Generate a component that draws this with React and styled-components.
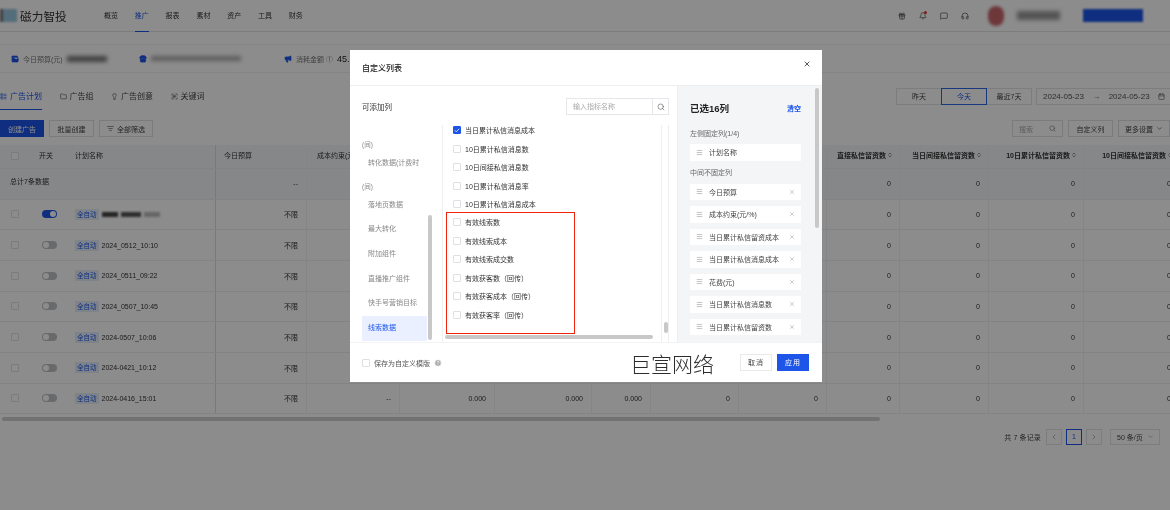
import React from "react";
import styled, { createGlobalStyle } from "styled-components";
import { Search, X, Calendar, ChevronDown, ChevronLeft, ChevronRight, ListFilter, Menu, Check, CircleHelp, Gift, Bell, MessageSquare, Headphones, LayoutList, Folder, Lightbulb, ScanText, Wallet, Store, Megaphone, ChevronsUpDown } from "lucide-react";

const Global = createGlobalStyle`
  html, body { margin: 0; padding: 0; background: #fff; }
  * { box-sizing: border-box; }
  body { font-family: "Liberation Sans", "Noto Sans CJK SC", sans-serif; color: #222; }
`;

const Stage = styled.div`
  position: relative;
  width: 1170px;
  height: 510px;
  overflow: hidden;
`;
const Page = styled.div`
  width: 1170px;
  height: 510px;
  overflow: hidden;
  background: #fff;
  filter: blur(0.6px);
`;
const TopBar = styled.header`
  height: 32px;
  display: flex;
  align-items: center;
  border-bottom: 1px solid #e3e4e6;
`;
const LogoMark = styled.div`
  width: 17px;
  height: 13px;
  background: linear-gradient(90deg, #777 0 20%, #9ac6e0 20%);
  filter: blur(1px);
`;
const LogoText = styled.div`
  font-size: 11.7px;
  width: 70px;
  margin-left: 3px;
  color: #333;
`;
const Nav = styled.nav`
  display: flex;
  gap: 16.8px;
  margin-left: 14px;
  height: 32px;
`;
const NavItem = styled.div`
  font-size: 7px;
  line-height: 31px;
  height: 32px;
  color: ${(p) => (p.$active ? "#1c55e8" : "#333")};
  border-bottom: 1px solid ${(p) => (p.$active ? "#1c55e8" : "transparent")};
`;
const TopRight = styled.div`
  margin-left: auto;
  display: flex;
  align-items: center;
  gap: 13px;
  padding-right: 27px;
  color: #444;
`;
const BellWrap = styled.span`
  position: relative;
  display: inline-flex;
  &::after {
    content: "";
    position: absolute;
    right: 0;
    top: -1px;
    width: 3px;
    height: 3px;
    border-radius: 50%;
    background: #e8352a;
  }
`;
const Avatar = styled.div`
  width: 16px;
  height: 20px;
  border-radius: 8px;
  margin-left: 6px;
  background: #c9646a;
  filter: blur(1.5px);
`;
const Smudge = styled.span`
  display: inline-block;
  width: ${(p) => p.$w}px;
  height: ${(p) => p.$h || 6}px;
  background: ${(p) => p.$c || "#777"};
  filter: blur(${(p) => p.$b || 2}px);
  flex: none;
`;
const AccountBtn = styled.div`
  width: 60px;
  height: 13px;
  background: #1c55e8;
  filter: blur(.8px);
  margin-left: 10px;
`;
const StatBar = styled.section`
  height: 29px;
  margin-top: 12px;
  border-top: 1px solid #eff0f2;
  border-bottom: 1px solid #eff0f2;
  display: flex;
  align-items: center;
  padding-left: 11px;
`;
const Stat = styled.div`
  display: flex;
  align-items: center;
  gap: 4px;
  width: ${(p) => p.$w}px;
  font-size: 7px;
  color: #777;
  flex: none;
  white-space: nowrap;
  svg { flex: none; }
`;
const StatValue = styled.span`
  font-size: 9px;
  color: #222;
`;
const TabRow = styled.div`
  height: 37px;
  margin-top: 1px;
  padding-top: 10px;
  display: flex;
  align-items: flex-start;
  justify-content: space-between;
`;
const Tabs = styled.div`
  display: flex;
  gap: 17.5px;
`;
const Tab = styled.div`
  height: 26px;
  display: flex;
  gap: 3px;
  padding-top: 7px;
  font-size: 8px;
  line-height: 11px;
  color: ${(p) => (p.$active ? "#1c55e8" : "#444")};
  border-bottom: 1px solid ${(p) => (p.$active ? "#1c55e8" : "transparent")};
  svg { margin-top: 1.5px; }
`;
const DateArea = styled.div`
  display: flex;
  gap: 4px;
  margin: 4px -5px 0 0;
`;
const Segment = styled.div`
  width: 46px;
  height: 17px;
  font-size: 7px;
  line-height: 15px;
  text-align: center;
  border: 1px solid ${(p) => (p.$active ? "#2f65e8" : "#e2e3e6")};
  margin-left: ${(p) => (p.$first ? 0 : -1)}px;
  color: ${(p) => (p.$active ? "#1c55e8" : "#444")};
  position: relative;
  z-index: ${(p) => (p.$active ? 1 : 0)};
`;
const Segments = styled.div`
  display: flex;
`;
const DateBox = styled.div`
  width: 139px;
  height: 17px;
  border: 1px solid #e2e3e6;
  display: flex;
  align-items: center;
  justify-content: space-between;
  font-size: 8px;
  padding: 0 9px 0 6px;
  color: #555;
`;
const ToolRow = styled.div`
  height: 17px;
  margin-top: 9px;
  display: flex;
  justify-content: space-between;
`;
const Tools = styled.div`
  display: flex;
  gap: 5px;
`;
const ToolBtn = styled.div`
  width: ${(p) => p.$w}px;
  height: 17px;
  font-size: 7px;
  display: flex;
  align-items: center;
  justify-content: center;
  gap: 3px;
  flex: none;
  border: 1px solid ${(p) => (p.$primary ? "#1c55e8" : "#dfe0e3")};
  background: ${(p) => (p.$primary ? "#1c55e8" : "#fff")};
  color: ${(p) => (p.$primary ? "#fff" : "#444")};
`;
const ToolSearch = styled(ToolBtn)`
  justify-content: space-between;
  padding: 0 6px;
  color: #aaa;
`;
const Table = styled.div`
  margin-top: 8px;
`;
const GridRow = styled.div`
  display: grid;
  grid-template-columns: 30px 35px 151px 91px 93px 95px 97px 59px 88px 88px 73px 89px 95px 96px;
  height: ${(p) => p.$h}px;
  background: ${(p) => p.$bg || "#fff"};
  border-bottom: 1px solid #eceef1;
  width: 1180px;
`;
const Cell = styled.div`
  font-size: 7px;
  display: flex;
  align-items: center;
  justify-content: flex-end;
  padding-right: 8px;
  border-right: 1px solid ${(p) => (p.$fixed ? "#dcdde0" : "#f1f2f4")};
  color: #333;
  white-space: nowrap;
  overflow: hidden;
`;
const TotalLabel = styled(Cell)`
  grid-column: 1 / 4;
  justify-content: flex-start;
  padding: 0 0 5px 10px;
  border-right: 1px solid #dcdde0;
`;
const HeadCell = styled(Cell)`
  font-weight: ${(p) => (p.$bold ? 700 : 400)};
  gap: 1px;
  padding: 0 6px 3px 0;
`;
const HeadLabel = styled(Cell)`
  justify-content: flex-start;
  padding: 0 0 3px ${(p) => p.$pl}px;
  border-right: 1px solid ${(p) => (p.$fixed ? "#dcdde0" : p.$plain ? "transparent" : "#f1f2f4")};
`;
const Box = styled.span`
  width: 8px;
  height: 8px;
  border: 1px solid ${(p) => (p.$on ? "#1c55e8" : "#dfe0e3")};
  background: ${(p) => (p.$on ? "#1c55e8" : "#fff")};
  border-radius: 1px;
  display: inline-flex;
  align-items: center;
  justify-content: center;
  flex: none;
  color: #fff;
`;
const CheckCell = styled(Cell)`
  justify-content: center;
  padding: 0;
  border-right: none;
`;
const SwitchCell = styled(Cell)`
  justify-content: flex-start;
  padding: 0 0 0 11.5px;
  border-right: none;
`;
const Toggle = styled.span`
  width: 15px;
  height: 8px;
  border-radius: 4px;
  background: ${(p) => (p.$on ? "#1c55e8" : "#bfc1c4")};
  position: relative;
  &::after {
    content: "";
    position: absolute;
    top: 1px;
    left: ${(p) => (p.$on ? "8px" : "1px")};
    width: 6px;
    height: 6px;
    border-radius: 50%;
    background: #fff;
  }
`;
const NameCell = styled(Cell)`
  justify-content: flex-start;
  padding: 0 0 0 10px;
  gap: 3px;
`;
const AutoTag = styled.span`
  font-size: 6.5px;
  line-height: 11px;
  padding: 0 2px;
  background: #e6effc;
  color: #1c55e8;
`;
const HScroll = styled.div`
  width: 878px;
  height: 4px;
  margin: 2.5px 0 0 2px;
  border-radius: 2px;
  background: #cfcfcf;
`;
const Pager = styled.div`
  display: flex;
  justify-content: flex-end;
  align-items: center;
  gap: 4px;
  margin-top: 8px;
  padding-right: 10px;
  font-size: 7px;
  color: #444;
`;
const PagerTotal = styled.span`
  letter-spacing: 0.15px;
  margin-right: 1px;
`;
const PageBtn = styled.div`
  width: 16px;
  height: 16px;
  border: 1px solid ${(p) => (p.$active ? "#1c55e8" : "#e2e3e6")};
  color: ${(p) => (p.$active ? "#1c55e8" : "#999")};
  display: flex;
  align-items: center;
  justify-content: center;
`;
const PageSize = styled.div`
  width: 50px;
  height: 16px;
  margin-left: 4px;
  border: 1px solid #e2e3e6;
  display: flex;
  align-items: center;
  justify-content: space-between;
  padding: 0 5px 0 6px;
`;

const Overlay = styled.div`
  position: absolute;
  inset: 0;
  background: rgba(0, 0, 0, 0.45);
  padding: 50px 0 0 350px;
`;
const Modal = styled.div`
  position: relative;
  width: 472px;
  height: 332px;
  background: #fff;
  display: flex;
  flex-direction: column;
  filter: blur(0.4px);
`;
const ModalHead = styled.div`
  height: 36px;
  flex: none;
  display: flex;
  align-items: center;
  justify-content: space-between;
  padding: 0 11px 0 12px;
  border-bottom: 1px solid #eeeff1;
  font-size: 8px;
  font-weight: 500;
  color: #222;
`;
const CloseIcon = styled.span`
  display: inline-flex;
  margin-top: -8px;
  color: #333;
`;
const ModalBody = styled.div`
  height: 256px;
  flex: none;
  display: flex;
  overflow: hidden;
`;
const LeftPane = styled.div`
  width: 327px;
  flex: none;
  padding: 0 8px 0 12px;
  display: flex;
  flex-direction: column;
`;
const PaneHead = styled.div`
  height: 39px;
  flex: none;
  display: flex;
  align-items: center;
  justify-content: space-between;
  padding-top: 2px;
  font-size: 7.5px;
  color: #333;
`;
const SearchBox = styled.div`
  width: 103px;
  height: 17px;
  border: 1px solid #e6e7ea;
  display: flex;
  font-size: 7px;
  color: #aaa;
`;
const SearchText = styled.div`
  flex: 1;
  line-height: 15px;
  padding-left: 6px;
  border-right: 1px solid #e6e7ea;
`;
const SearchIcon = styled.div`
  width: 15px;
  display: flex;
  align-items: center;
  justify-content: center;
  color: #666;
`;
const Columns = styled.div`
  flex: 1;
  display: flex;
  min-height: 0;
`;
const Cats = styled.div`
  position: relative;
  width: 80px;
  flex: none;
  padding-top: 14px;
  overflow: hidden;
`;
const CatNote = styled.div`
  height: 11px;
  margin-bottom: ${(p) => p.$gap || 0}px;
  font-size: 6.5px;
  line-height: 11px;
  color: #888;
`;
const Cat = styled.div`
  width: 65px;
  height: 24.7px;
  padding-left: 6px;
  margin-bottom: ${(p) => p.$gap || 0}px;
  font-size: 7px;
  line-height: 24.7px;
  white-space: nowrap;
  overflow: hidden;
  color: ${(p) => (p.$active ? "#1c55e8" : "#888")};
  background: ${(p) => (p.$active ? "#eaf0ff" : "transparent")};
`;
const CatThumb = styled.div`
  position: absolute;
  left: 66px;
  top: 90px;
  bottom: 2px;
  width: 4px;
  border-radius: 2px;
  background: #c8c8c8;
`;
const ListPane = styled.div`
  position: relative;
  width: 220px;
  flex: none;
  border-left: 1px solid #eeeff1;
  border-right: 1px solid #eeeff1;
  overflow: hidden;
`;
const ListTrack = styled.div`
  position: relative;
  width: 7px;
  flex: none;
  border-right: 1px solid #eeeff1;
`;
const ListThumb = styled.div`
  position: absolute;
  left: 2px;
  bottom: 9px;
  width: 4px;
  height: 11px;
  border-radius: 2px;
  background: #c8c8c8;
`;
const ListScroll = styled.div`
  margin-top: -4px;
`;
const Item = styled.div`
  height: 18.45px;
  display: flex;
  align-items: center;
  gap: 4px;
  padding-left: 10px;
  font-size: 7px;
  color: #333;
`;
const ListHBar = styled.div`
  position: absolute;
  left: 2px;
  bottom: 3px;
  width: 208px;
  height: 4px;
  border-radius: 2px;
  background: #c8c8c8;
`;
const RightPane = styled.div`
  position: relative;
  flex: 1;
  background: #f3f5f7;
  padding: 16px 21px 0 12px;
  overflow: hidden;
  border-left: 1px solid #eeeff1;
`;
const RightHead = styled.div`
  display: flex;
  justify-content: space-between;
  align-items: center;
  font-size: 9.5px;
  font-weight: 700;
  color: #222;
  height: 12px;
  margin-bottom: 15px;
`;
const ClearLink = styled.span`
  font-size: 7px;
  font-weight: 700;
  color: #1c55e8;
`;
const GroupTitle = styled.div`
  font-size: 7px;
  color: #666;
  height: 10px;
  line-height: 10px;
  margin-bottom: ${(p) => p.$gap}px;
`;
const Picked = styled.div`
  height: 16.5px;
  margin-bottom: ${(p) => p.$gap ?? 6}px;
  background: #fff;
  display: flex;
  align-items: center;
  gap: 6px;
  padding: 0 6px;
  font-size: 7px;
  color: #444;
  white-space: nowrap;
`;
const PickedRemove = styled.span`
  margin-left: auto;
  display: inline-flex;
  color: #999;
`;
const RightThumb = styled.div`
  position: absolute;
  right: 3px;
  top: 2px;
  width: 4px;
  height: 140px;
  border-radius: 2px;
  background: #c8c8c8;
`;
const Footer = styled.div`
  flex: 1;
  display: grid;
  grid-template-columns: 268px 110px 1fr;
  align-items: center;
  padding-left: 12px;
  border-top: 1px solid #f3f3f4;
`;
const SaveTemplate = styled.div`
  display: flex;
  align-items: center;
  gap: 4px;
  font-size: 7px;
  color: #555;
`;
const Watermark = styled.div`
  font-family: "Noto Sans CJK SC", sans-serif;
  font-size: 21px;
  font-weight: 300;
  color: #2c2c2c;
  white-space: nowrap;
`;
const FootBtns = styled.div`
  display: flex;
  gap: 5px;
`;
const FootBtn = styled.div`
  width: 32px;
  height: 17px;
  font-size: 7px;
  letter-spacing: 1px;
  line-height: 15px;
  text-align: center;
  border: 1px solid ${(p) => (p.$primary ? "#1c55e8" : "#e8e9eb")};
  background: ${(p) => (p.$primary ? "#1c55e8" : "#fff")};
  color: ${(p) => (p.$primary ? "#fff" : "#444")};
`;
const RedFrame = styled.div`
  position: absolute;
  left: 96px;
  top: 162px;
  width: 129px;
  height: 122px;
  border: 1.5px solid #f0220c;
`;

const rows = [null, "2024_0512_10:10", "2024_0511_09:22", "2024_0507_10:45", "2024-0507_10:06", "2024-0421_10:12", "2024-0416_15:01"];
const metrics = ["--", "0.000", "0.000", "0.000", "0", "0", "0", "0", "0", "0"];
const topNav = ["概览", "推广", "报表", "素材", "资产", "工具", "财务"];
const heads = ["直接私信留资数", "当日间接私信留资数", "10日累计私信留资数", "10日间接私信留资数"];
const options = ["当日累计私信消息成本", "10日累计私信消息数", "10日间接私信消息数", "10日累计私信消息率", "10日累计私信消息成本", "有效线索数", "有效线索成本", "有效线索成交数", "有效获客数（回传）", "有效获客成本（回传）", "有效获客率（回传）"];
const picked = ["今日预算", "成本约束(元/%)", "当日累计私信留资成本", "当日累计私信消息成本", "花费(元)", "当日累计私信消息数", "当日累计私信留资数"];

function PlanRow({ name, on, covered }) {
  return (
    <GridRow $h={30.7}>
      <CheckCell><Box /></CheckCell>
      <SwitchCell><Toggle $on={on} /></SwitchCell>
      <NameCell $fixed>
        <AutoTag>全自动</AutoTag>
        {name || (<><Smudge $w={16} $h={5} $c="#444" $b={0.8} /><Smudge $w={20} $h={5} $c="#555" $b={1.2} /><Smudge $w={16} $h={5} $c="#bbb" $b={1.2} /></>)}
      </NameCell>
      <Cell>不限</Cell>
      {metrics.map((m, i) => <Cell key={i}>{covered && i < 6 ? "" : m}</Cell>)}
    </GridRow>
  );
}

export default function App() {
  return (
    <Stage>
      <Global />
      <Page>
        <TopBar>
          <LogoMark />
          <LogoText>磁力智投</LogoText>
          <Nav>{topNav.map((n, i) => <NavItem key={n} $active={i === 1}>{n}</NavItem>)}</Nav>
          <TopRight>
            <Gift size={8} />
            <BellWrap><Bell size={8} /></BellWrap>
            <MessageSquare size={8} />
            <Headphones size={8} />
            <Avatar />
            <Smudge $w={43} $h={9} $c="#999" />
            <AccountBtn />
          </TopRight>
        </TopBar>
        <StatBar>
          <Stat $w={128}><Wallet size={8} color="#1c55e8" fill="#1c55e8" />今日预算(元)<Smudge $w={40} $c="#777" /></Stat>
          <Stat $w={145}><Store size={8} color="#1c55e8" fill="#1c55e8" /><Smudge $w={90} $h={5} $c="#aaa" /></Stat>
          <Stat $w={80}><Megaphone size={8} color="#1c55e8" fill="#1c55e8" />消耗金额 ①<StatValue>45.</StatValue></Stat>
        </StatBar>
        <TabRow>
          <Tabs>
            <Tab $active><LayoutList size={7} />广告计划</Tab>
            <Tab><Folder size={7} />广告组</Tab>
            <Tab><Lightbulb size={7} />广告创意</Tab>
            <Tab><ScanText size={7} />关键词</Tab>
          </Tabs>
          <DateArea>
            <Segments>
              <Segment $first>昨天</Segment>
              <Segment $active>今天</Segment>
              <Segment>最近7天</Segment>
            </Segments>
            <DateBox><span>2024-05-23</span><span>→</span><span>2024-05-23</span><Calendar size={7} /></DateBox>
          </DateArea>
        </TabRow>
        <ToolRow>
          <Tools>
            <ToolBtn $primary $w={44}>创建广告</ToolBtn>
            <ToolBtn $w={45}>批量创建</ToolBtn>
            <ToolBtn $w={54}><ListFilter size={7} />全部筛选</ToolBtn>
          </Tools>
          <Tools>
            <ToolSearch $w={51}>搜索<Search size={7} color="#777" /></ToolSearch>
            <ToolBtn $w={45}>自定义列</ToolBtn>
            <ToolBtn $w={52}>更多设置<ChevronDown size={7} /></ToolBtn>
          </Tools>
        </ToolRow>
        <Table>
          <GridRow $h={23.5} $bg="#f4f6f8">
            <CheckCell><Box /></CheckCell>
            <HeadLabel $pl={9} $plain>开关</HeadLabel>
            <HeadLabel $pl={10} $fixed>计划名称</HeadLabel>
            <HeadLabel $pl={8}>今日预算</HeadLabel>
            <HeadLabel $pl={10}>成本约束(元/%)</HeadLabel>
            <HeadCell /><HeadCell /><HeadCell /><HeadCell /><HeadCell />
            {heads.map((h) => <HeadCell key={h} $bold>{h}<ChevronsUpDown size={6} /></HeadCell>)}
          </GridRow>
          <GridRow $h={31} $bg="#f4f6f8">
            <TotalLabel>总计7条数据</TotalLabel>
            <Cell>--</Cell>
            {metrics.map((_, i) => <Cell key={i}>{i > 5 ? "0" : ""}</Cell>)}
          </GridRow>
          {rows.map((n, i) => <PlanRow key={i} name={n} on={i === 0} covered={i < 6} />)}
        </Table>
        <HScroll />
        <Pager>
          <PagerTotal>共 7 条记录</PagerTotal>
          <PageBtn><ChevronLeft size={8} /></PageBtn>
          <PageBtn $active>1</PageBtn>
          <PageBtn><ChevronRight size={8} /></PageBtn>
          <PageSize>50 条/页<ChevronDown size={7} color="#999" /></PageSize>
        </Pager>
      </Page>
      <Overlay>
        <Modal>
          <ModalHead>自定义列表<CloseIcon><X size={8} strokeWidth={2.5} /></CloseIcon></ModalHead>
          <ModalBody>
            <LeftPane>
              <PaneHead>
                可添加列
                <SearchBox>
                  <SearchText>输入指标名称</SearchText>
                  <SearchIcon><Search size={8} /></SearchIcon>
                </SearchBox>
              </PaneHead>
              <Columns>
                <Cats>
                  <CatNote $gap={1}>(间)</CatNote>
                  <Cat $gap={5}>转化数据(计费时</Cat>
                  <CatNote $gap={1}>(间)</CatNote>
                  <Cat>落地页数据</Cat>
                  <Cat>最大转化</Cat>
                  <Cat>附加组件</Cat>
                  <Cat>直播推广组件</Cat>
                  <Cat>快手号营销目标</Cat>
                  <Cat $active>线索数据</Cat>
                  <CatThumb />
                </Cats>
                <ListPane>
                  <ListScroll>
                    {options.map((o, i) => (
                      <Item key={o}>
                        <Box $on={i === 0}>{i === 0 && <Check size={7} strokeWidth={3} />}</Box>
                        {o}
                      </Item>
                    ))}
                  </ListScroll>
                  <ListHBar />
                </ListPane>
                <ListTrack><ListThumb /></ListTrack>
              </Columns>
            </LeftPane>
            <RightPane>
              <RightHead>已选16列<ClearLink>清空</ClearLink></RightHead>
              <GroupTitle $gap={5}>左侧固定列(1/4)</GroupTitle>
              <Picked $gap={7}><Menu size={7} color="#999" />计划名称</Picked>
              <GroupTitle $gap={6}>中间不固定列</GroupTitle>
              {picked.map((p) => (
                <Picked key={p}>
                  <Menu size={7} color="#999" />{p}
                  <PickedRemove><X size={6} /></PickedRemove>
                </Picked>
              ))}
              <RightThumb />
            </RightPane>
          </ModalBody>
          <Footer>
            <SaveTemplate><Box />保存为自定义模版<CircleHelp size={8} color="#fff" fill="#aaa" /></SaveTemplate>
            <Watermark>巨宣网络</Watermark>
            <FootBtns>
              <FootBtn>取消</FootBtn>
              <FootBtn $primary>应用</FootBtn>
            </FootBtns>
          </Footer>
          <RedFrame />
        </Modal>
      </Overlay>
    </Stage>
  );
}
